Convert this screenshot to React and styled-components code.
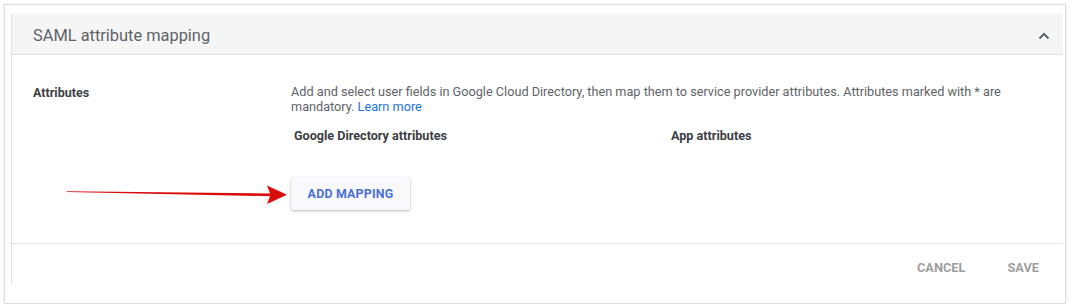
import React from 'react'
import styled, { createGlobalStyle } from 'styled-components'

const Global = createGlobalStyle`
  html, body {
    margin: 0;
    background: #fff;
    font-family: Roboto, "Liberation Sans", Arial, sans-serif;
  }
`

const Frame = styled.div`
  position: relative;
  margin: 4px 0 0 4px;
  width: 1062px;
  height: 300px;
  box-sizing: border-box;
  border: 1px solid #dcdcdc;
  box-shadow: 0 1px 3px rgba(0,0,0,0.12);
  padding: 9px 2px 0 6px;
  background: #fff;
`

const Panel = styled.section`
  border-left: 1px solid #e0e0e0;
  height: 270px;
  display: flex;
  flex-direction: column;
`

const Header = styled.div`
  height: 41px;
  box-sizing: border-box;
  background: #f5f5f5;
  border-bottom: 1px solid #e0e0e0;
  display: flex;
  align-items: center;
  justify-content: space-between;
  padding: 3px 13px 0 21px;
`

const Title = styled.h2`
  margin: 0;
  font-size: 16.4px;
  font-weight: 400;
  color: #5f6368;
`

const Body = styled.div`
  height: 189px;
  box-sizing: border-box;
  border-bottom: 1px solid #e4e4e4;
  display: grid;
  grid-template-columns: 258px 1fr;
  padding: 29px 0 0 21px;
`

const Label = styled.div`
  font-size: 12.5px;
  font-weight: 700;
  color: #3c4043;
  padding-top: 1px;
`

const Content = styled.div`
  display: flex;
  flex-direction: column;
  padding-right: 30px;
`

const Description = styled.p`
  margin: 0;
  font-size: 12.7px;
  line-height: 15px;
  color: #5f6368;
`

const Link = styled.a`
  color: #1a73e8;
  text-decoration: none;
`

const Columns = styled.div`
  display: grid;
  grid-template-columns: 377px 1fr;
  padding: 14px 0 0 3px;
`

const ColHead = styled.div`
  font-size: 12.6px;
  font-weight: 700;
  color: #3c4043;
`

const Raised = styled.button`
  align-self: flex-start;
  margin-top: 34px;
  width: 119px;
  height: 33px;
  border: none;
  border-radius: 3px;
  background: #f9f9fb;
  box-shadow: 0 1px 3px rgba(0,0,0,0.28);
  font-family: inherit;
  font-size: 12.4px;
  font-weight: 700;
  letter-spacing: 0.2px;
  color: #4a70d8;
  cursor: pointer;
`

const Footer = styled.div`
  flex: 1;
  display: flex;
  justify-content: flex-end;
  align-items: flex-start;
  padding: 17px 24px 0 0;
  gap: 42px;
`

const FlatButton = styled.button`
  border: none;
  background: none;
  padding: 0;
  font-family: inherit;
  font-size: 12.8px;
  font-weight: 700;
  line-height: 14px;
  color: #9e9e9e;
`

const Chevron = () => (
  <svg width="12" height="8" viewBox="0 0 12 8">
    <path d="M1.5 6.5 L6 2 L10.5 6.5" fill="none" stroke="#5f6368" strokeWidth="2" />
  </svg>
)

const Arrow = styled.svg`
  position: absolute;
  left: 62px;
  top: 180px;
`

const App = () => (
  <>
    <Global />
    <Frame>
      <Panel>
        <Header>
          <Title>SAML attribute mapping</Title>
          <Chevron />
        </Header>
        <Body>
          <Label>Attributes</Label>
          <Content>
            <Description>
              Add and select user fields in Google Cloud Directory, then map them to service provider attributes. Attributes marked with * are mandatory. <Link href="#">Learn more</Link>
            </Description>
            <Columns>
              <ColHead>Google Directory attributes</ColHead>
              <ColHead>App attributes</ColHead>
            </Columns>
            <Raised>ADD MAPPING</Raised>
          </Content>
        </Body>
        <Footer>
          <FlatButton>CANCEL</FlatButton>
          <FlatButton>SAVE</FlatButton>
        </Footer>
      </Panel>
      <Arrow width="230" height="24" viewBox="0 0 230 24">
        <path d="M0 6.3 L203 8.4 L200 0.5 L220 9.8 L200 19 L203 11.2 L0 7 Z" fill="#d90d0d" />
      </Arrow>
    </Frame>
  </>
)

export default App
